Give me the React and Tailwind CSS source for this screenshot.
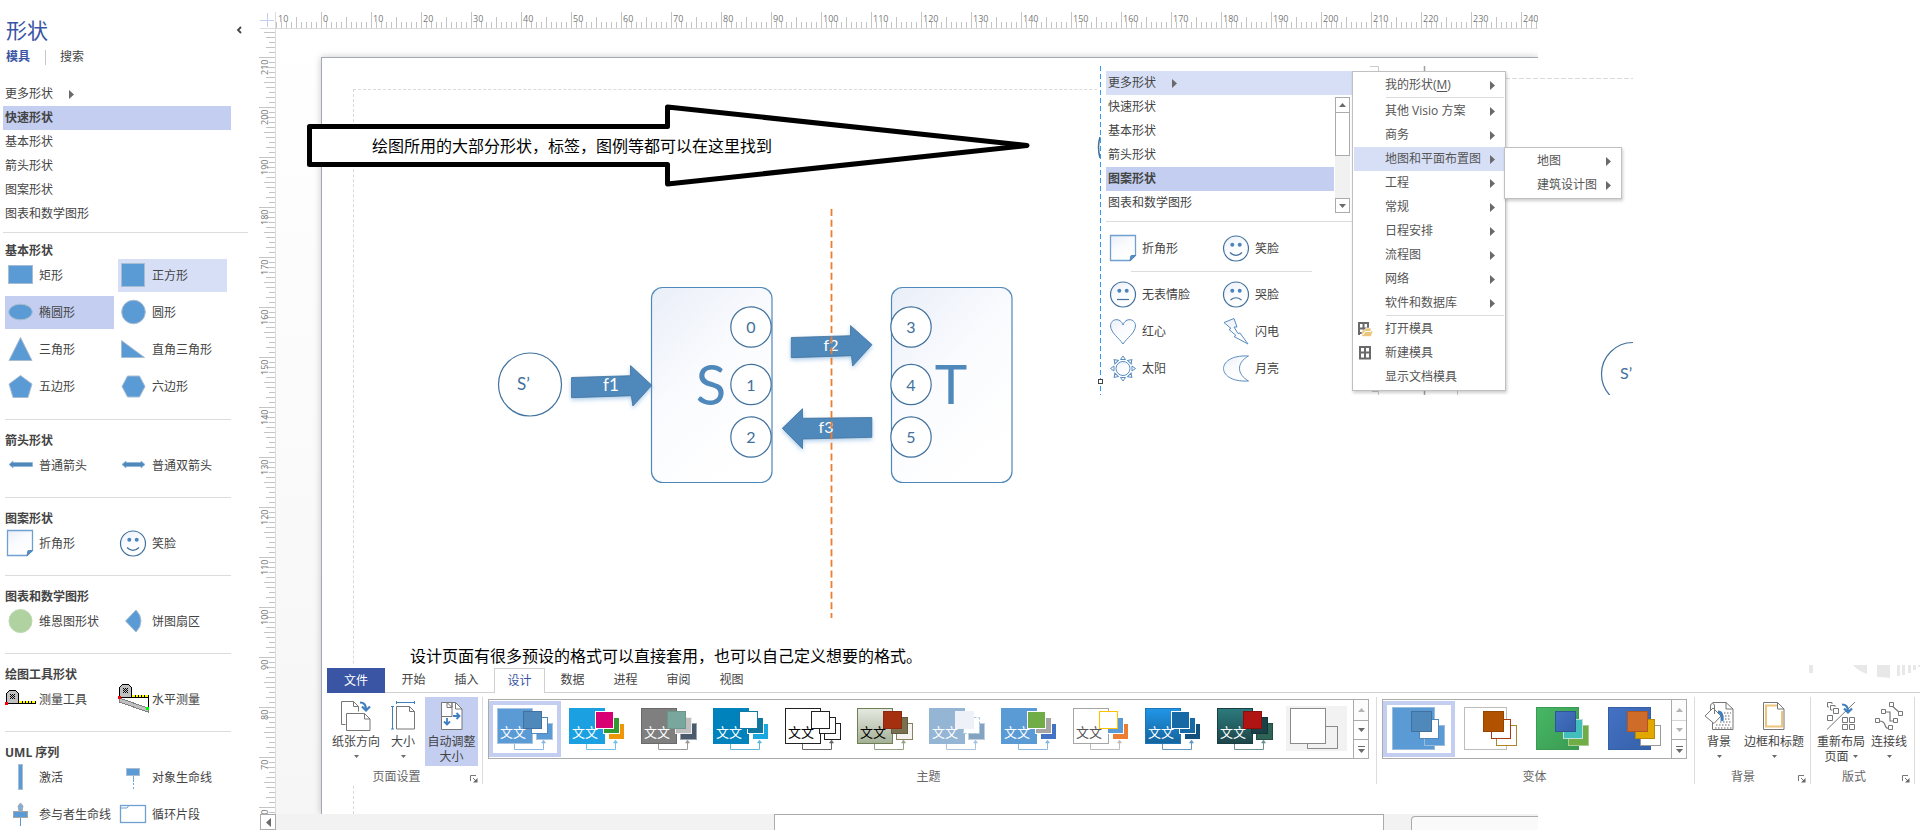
import React from "react";

const BLUE = "#5b9bd5";
const EDGE = "#a9bdd2";
const LINE = "#41719c";

function Defs() {
  return (
    <svg className="absolute h-0 w-0" aria-hidden="true">
      <defs>
        <linearGradient id="soft" x1="0" y1="0" x2="0.6" y2="1">
          <stop offset="0" stopColor="#e9eef8" />
          <stop offset="0.5" stopColor="#fafbfe" />
          <stop offset="1" stopColor="#fff" />
        </linearGradient>
        <linearGradient id="olive" x1="0" y1="0" x2="0" y2="1">
          <stop offset="0" stopColor="#e6e9e2" />
          <stop offset="1" stopColor="#a3b095" />
        </linearGradient>
        <linearGradient id="azure" x1="0" y1="0" x2="0" y2="1">
          <stop offset="0" stopColor="#2196e8" />
          <stop offset="1" stopColor="#14639c" />
        </linearGradient>
        <linearGradient id="pine" x1="0" y1="0" x2="0" y2="1">
          <stop offset="0" stopColor="#2c7b7d" />
          <stop offset="1" stopColor="#1d4549" />
        </linearGradient>
        <linearGradient id="leaf" x1="0" y1="0" x2="1" y2="1">
          <stop offset="0" stopColor="#47b865" />
          <stop offset="1" stopColor="#3a9a52" />
        </linearGradient>
        <linearGradient id="royal" x1="0" y1="0" x2="1" y2="1">
          <stop offset="0" stopColor="#4472c4" />
          <stop offset="1" stopColor="#3560a8" />
        </linearGradient>
      </defs>
    </svg>
  );
}

/* ---------- shape icons ---------- */

function Icon({ children }) {
  return (
    <svg className="h-8 w-8 shrink-0" viewBox="1 0 32 32" fill="none" aria-hidden="true">
      {children}
    </svg>
  );
}

function Note() {
  return (
    <Icon>
      <path d="M3.500 2.500h25v20l-5.500 5h-19.500z" fill="url(#soft)" stroke="#6fa0cf" strokeWidth="1.300" />
      <path d="M23 27.500l1-4.800 4.500-.2z" fill="#5b93c9" stroke="#4a82b8" />
    </Icon>
  );
}

function Face({ mouth }) {
  return (
    <Icon>
      <circle cx="16" cy="15.500" r="12.500" fill="url(#soft)" stroke={LINE} strokeWidth="1.200" />
      <circle cx="12.300" cy="11.800" r="2" fill="#4a86bd" />
      <circle cx="19.700" cy="11.800" r="2" fill="#4a86bd" />
      <path d={mouth} stroke={LINE} strokeWidth="1.200" />
    </Icon>
  );
}

const SMILE = "M10 19.500q6 6 12 0";
const FLAT = "M10 20.500h12";
const FROWN = "M10.500 21q5.500-4.500 11 0";

function Tape({ slope }) {
  const dy = slope ? -3 : 3;
  return (
    <Icon>
      <g transform={`translate(0 ${dy})`} shapeRendering="crispEdges">
        {slope && <path d="M2 17l29 10v4l-29-10z" fill="#c0c0c0" stroke="#808080" />}
        <path d="M2.500 16.500v-10l3-3h6l3 3v10z" fill="#c0c0c0" stroke="#000" />
        <path d="M6 7h1v1h-1zM8 7h1v1h-1zM10 7h1v1h-1zM7 8h1v1h-1zM9 8h1v1h-1zM6 9h1v1h-1zM8 9h1v1h-1zM10 9h1v1h-1zM7 10h1v1h-1zM9 10h1v1h-1zM6 11h1v1h-1zM8 11h1v1h-1zM10 11h1v1h-1z" fill="#000" />
        <path d="M15 14h16v2h-16z" fill="#ff0" />
        <path d="M15 16.500h17M18.500 14v2M21.500 14v2M24.500 14v2M27.500 14v2M31.500 14v3" stroke="#000" />
        {slope && <path d="M31.500 17v10" stroke="#000" />}
        {slope && <path d="M29 26h3v3h-3z" fill="#0f0" />}
        <path d="M1 15h3v3h-3z" fill="#f00" />
      </g>
    </Icon>
  );
}

const ICONS = {
  rect: <Icon><rect x="4.500" y="5.500" width="24" height="18" fill={BLUE} stroke={EDGE} /></Icon>,
  square: <Icon><rect x="4.500" y="3.500" width="23" height="23" fill={BLUE} stroke={EDGE} /></Icon>,
  ellipse: <Icon><ellipse cx="16.500" cy="15" rx="11.800" ry="7.800" fill={BLUE} stroke={EDGE} /></Icon>,
  circle: <Icon><circle cx="16.500" cy="15" r="11.800" fill={BLUE} stroke={EDGE} /></Icon>,
  triangle: <Icon><path d="M16.500 3.500L28 26.500h-23z" fill={BLUE} stroke={EDGE} /></Icon>,
  rightTri: <Icon><path d="M4.500 6.500L27.500 23.500h-23z" fill={BLUE} stroke={EDGE} /></Icon>,
  pentagon: <Icon><path d="M16.500 4.500L28 13L24 26.500h-15L5 13z" fill={BLUE} stroke={EDGE} /></Icon>,
  hexagon: <Icon><path d="M10.500 5h12L28 15.500L22.500 26h-12L5 15.500z" fill={BLUE} stroke={EDGE} /></Icon>,
  arrow: <Icon><path d="M5 14.500l4-3.500v1.500h19.500v4h-19.500v1.500z" fill="#4f88bb" stroke="#8fb4d6" strokeWidth="0.800" /></Icon>,
  twoWay: <Icon><path d="M5 14.500l4-3.500v1.500h15v-1.500l4 3.500-4 3.500v-1.500h-15v1.500z" fill="#4f88bb" stroke="#8fb4d6" strokeWidth="0.800" /></Icon>,
  note: <Note />,
  smile: <Face mouth={SMILE} />,
  flat: <Face mouth={FLAT} />,
  frown: <Face mouth={FROWN} />,
  venn: <Icon><circle cx="16.500" cy="15" r="11.500" fill="#b0d2a0" stroke="#bcd8b0" /></Icon>,
  pie: <Icon><path d="M8.500 15L19 4q5 5 5 11t-5 11z" fill={BLUE} stroke={EDGE} /></Icon>,
  tape: <Tape />,
  level: <Tape slope />,
  bar: <Icon><rect x="14.500" y="2.500" width="4" height="25" fill={BLUE} stroke={EDGE} /></Icon>,
  lifeline: <Icon><rect x="9.500" y="6.500" width="13" height="7" fill={BLUE} stroke={EDGE} /><path d="M16.500 14v6M16.500 21v2M16.500 25v2" stroke="#6fa6da" /></Icon>,
  actor: <Icon><path d="M16.500 4l2.500 3-1 5h-3l-1-5z" fill="#7fb0dd" stroke="#a6a6a6" /><rect x="9.500" y="12.500" width="14" height="6" fill={BLUE} stroke="#a6a6a6" /><path d="M16.500 19v8" stroke={BLUE} /></Icon>,
  loop: <Icon><rect x="3.500" y="6.500" width="25" height="17" stroke="#6fa0cf" strokeWidth="1.300" /><path d="M4 9h6l1.500-2" stroke="#6fa0cf" /></Icon>,
  heart: <Icon><path d="M16 28C12 22 4 17 3.500 10C3.500 2.500 13.500 1 16 9C18.500 1 28.500 2.500 28.500 10C28 17 20 22 16 28z" fill="url(#soft)" stroke="#5a8dbf" /></Icon>,
  bolt: <Icon><path d="M14 2.500L4 6.500l7 6-2 1 7 6-2 1 14 7.500-8-11-2 .5-4-6.500h3z" fill="url(#soft)" stroke="#5a8dbf" /></Icon>,
  sun: (
    <Icon>
      <circle cx="16" cy="15.500" r="7" fill="url(#soft)" stroke="#5a8dbf" />
      {[0, 45, 90, 135, 180, 225, 270, 315].map((a) => (
        <path key={a} d="M13.500 6.500L16 3l2.500 3.500z" stroke="#5a8dbf" transform={`rotate(${a} 16 15.5)`} />
      ))}
    </Icon>
  ),
  moon: <Icon><path d="M28.500 3C10 2 3.500 10 3.500 15.500S10 29 28.500 28C17 21.500 16 10 28.500 3z" fill="url(#soft)" stroke="#5a8dbf" /></Icon>,
};

/* ---------- side panel ---------- */

const SECTIONS = [
  {
    title: "基本形状",
    items: [
      ["rect", "矩形"], ["square", "正方形", "bg-[#d7dff6]"],
      ["ellipse", "椭圆形", "bg-[#c3cef1]"], ["circle", "圆形"],
      ["triangle", "三角形"], ["rightTri", "直角三角形"],
      ["pentagon", "五边形"], ["hexagon", "六边形"],
    ],
  },
  { title: "箭头形状", items: [["arrow", "普通箭头"], ["twoWay", "普通双箭头"]] },
  { title: "图案形状", items: [["note", "折角形"], ["smile", "笑脸"]] },
  { title: "图表和数学图形", items: [["venn", "维恩图形状"], ["pie", "饼图扇区"]] },
  { title: "绘图工具形状", items: [["tape", "测量工具"], ["level", "水平测量"]] },
  { title: "UML 序列", items: [["bar", "激活"], ["lifeline", "对象生命线"], ["actor", "参与者生命线"], ["loop", "循环片段"]] },
];

function Tri({ className = "" }) {
  return (
    <svg className={`h-[9px] w-[5px] shrink-0 ${className}`} viewBox="0 0 5 9" aria-hidden="true">
      <path d="M0 0l5 4.500-5 4.500z" fill="#6a6a6a" />
    </svg>
  );
}

function ShapeButton({ item: [icon, label, bg = ""] }) {
  return (
    <button className={`flex h-[33px] items-center whitespace-nowrap text-left ${bg}`}>
      {ICONS[icon]}
      <span className="ml-[2px]">{label}</span>
    </button>
  );
}

function ListRow({ label, active }) {
  return (
    <button className={`flex h-6 w-full items-center pl-[2px] text-left ${active ? "bg-[#c3cef1] font-bold" : ""}`}>
      {label}
    </button>
  );
}

function SidePanel() {
  return (
    <aside className="w-[260px] shrink-0 pl-[3px] pt-4">
      <header className="flex h-7 items-center justify-between pl-[3px] pr-[18px]">
        <h1 className="text-[21px] leading-7 text-[#3955a3]">形状</h1>
        <button aria-label="折叠">
          <svg className="h-2 w-[6px]" viewBox="0 0 6 8" fill="none">
            <path d="M5 1L2 4l3 3" stroke="#444" strokeWidth="1.800" />
          </svg>
        </button>
      </header>
      <nav className="mt-[2px] flex h-[22px] items-center pl-[3px]">
        <button className="font-bold text-[#3955a3]">模具</button>
        <span className="ml-[15px] mr-[14px] h-[15px] w-px bg-[#c6c6c6]" />
        <button>搜索</button>
      </nav>
      <div className="mt-[14px] pr-[29px]">
        <button className="flex h-6 w-full items-center pl-[2px]">
          更多形状
          <Tri className="ml-4" />
        </button>
        {["快速形状", "基本形状", "箭头形状", "图案形状", "图表和数学图形"].map((t, i) => (
          <ListRow key={t} label={t} active={i === 0} />
        ))}
      </div>
      <div className="mr-3 mt-[6px] h-px bg-[#dcdcdc]" />
      {SECTIONS.map((s, i) => (
        <section
          key={s.title}
          className={`ml-[2px] mr-[29px] ${i === 0 ? "pb-4 pt-[9px]" : "border-t border-[#dcdcdc] pt-3"} ${i > 0 && i < 5 ? "pb-[15px]" : ""}`}
        >
          <h2 className="h-[17px] font-bold leading-[17px]">{s.title}</h2>
          <div className="grid grid-cols-[109px_109px] gap-1">
            {s.items.map((it) => (
              <ShapeButton key={it[1]} item={it} />
            ))}
          </div>
        </section>
      ))}
    </aside>
  );
}

/* ---------- rulers ---------- */

const tickSize = (i) => (i % 10 === 0 ? 16 : i % 5 === 0 ? 11 : i % 2 === 0 ? 9 : 6);

function TopRuler() {
  const ticks = [];
  for (let i = -9; i <= 244; i++) {
    const x = 45.500 + i * 5;
    const k = ((i % 10) + 10) % 10;
    if (x < 1262) ticks.push(<path key={i} d={`M${x} 16v${-(k === 0 ? 16 : k === 5 ? 11 : 6)}`} stroke="#c4c4c4" />);
  }
  const labels = [<text key="n" x="2" y="10">10</text>];
  for (let v = 0; v <= 240; v += 10) labels.push(<text key={v} x={47 + v * 5} y="10">{v}</text>);
  return (
    <svg className="h-[17px] min-w-0 flex-1 overflow-hidden border-b border-[#dcdcdc]" aria-hidden="true">
      {ticks}
      <g fill="#777" className="font-['Open_Sans',sans-serif] text-[9px]">{labels}</g>
    </svg>
  );
}

function LeftRuler() {
  const ticks = [];
  for (let i = -5; i <= 151; i++) {
    const y = 28.500 + i * 5;
    ticks.push(<path key={i} d={`M15 ${y}h${-tickSize(Math.abs(i))}`} stroke="#c4c4c4" />);
  }
  const labels = [];
  for (let n = 0; n < 16; n++) {
    const v = 210 - n * 10;
    const y = 29 + n * 50;
    labels.push(
      <text key={v} transform={`translate(8 ${y + (v >= 100 ? 17 : 12)}) rotate(-90)`}>{v}</text>
    );
  }
  return (
    <svg className="h-full w-4 shrink-0 overflow-visible border-r border-[#dcdcdc]" aria-hidden="true">
      {ticks}
      <g fill="#777" className="font-['Open_Sans',sans-serif] text-[9px]">{labels}</g>
    </svg>
  );
}

/* ---------- diagram ---------- */

function Diagram() {
  const state = (cx, cy, t) => (
    <g key={t}>
      <circle cx={cx} cy={cy} r="20.200" fill="#fff" stroke={LINE} strokeWidth="1.200" />
      <text x={cx} y={cy + 6} fontSize="16" fill={LINE} textAnchor="middle">{t}</text>
    </g>
  );
  return (
    <svg
      className="absolute left-[24px] top-[71px] h-[520px] w-[740px] font-[Lato,'Open_Sans',sans-serif]"
      viewBox="300 100 740 520"
      fill="none"
    >
      <path d="M309.500 126.500H667.500V107L1027 145.500L667.500 184V164.500H309.500z" fill="#fff" stroke="#000" strokeWidth="5" strokeLinejoin="round" />
      <circle cx="530" cy="384.500" r="31.500" stroke={LINE} strokeWidth="1.200" />
      <text x="517" y="390" fontSize="17" fill={LINE}>S’</text>
      <rect x="651.500" y="287.500" width="120.500" height="195" rx="11" fill="url(#soft)" stroke="#4f88bb" strokeWidth="1.200" />
      <rect x="891.500" y="287.500" width="120.500" height="195" rx="11" fill="url(#soft)" stroke="#4f88bb" strokeWidth="1.200" />
      <text x="711" y="405" fontSize="56" fill="#4f88bb" textAnchor="middle">S</text>
      <text x="951" y="404" fontSize="55" fill="#4f88bb" textAnchor="middle">T</text>
      {state(751, 327, "0")}
      {state(751, 384.500, "1")}
      {state(751, 437, "2")}
      {state(911, 327, "3")}
      {state(911, 384.500, "4")}
      {state(911, 437, "5")}
      <g fill="#4f88bb" stroke="#41719c" strokeWidth="0.800" className="drop-shadow-[0_2px_2px_rgba(91,155,213,0.5)]">
        <path d="M571.500 377.500L630.500 375.700V365.500L651.800 385.300L632.900 406L631.300 395.700L571.500 397.700z" />
        <path d="M791.300 337.500L850.500 335.700V325.500L872 344.700L852.700 366L851.500 355.700L791.300 357.700z" />
        <path d="M782.300 428.300L802.500 408.700V418.300L871.800 417.500V437.300L802.500 439V448.700z" />
      </g>
      <g fill="#fff" fontSize="17" textAnchor="middle">
        <text x="611" y="391">f1</text>
        <text x="831" y="351" fontSize="16">f2</text>
        <text x="826" y="433" fontSize="16">f3</text>
      </g>
      <path d="M831.500 209V618" stroke="#ed7d31" strokeWidth="1.800" strokeDasharray="7 3.630" />
    </svg>
  );
}

/* ---------- stencil popup ---------- */

const MENU = [
  ["我的形状(M)", true],
  null,
  ["其他 Visio 方案", true], ["商务", true], ["地图和平面布置图", true, true], ["工程", true],
  ["常规", true], ["日程安排", true], ["流程图", true], ["网络", true], ["软件和数据库", true],
  null,
  ["打开模具"], ["新建模具"], ["显示文档模具"],
];

function MenuIcon({ name }) {
  if (name === "打开模具")
    return (
      <svg className="h-4 w-4" viewBox="0 0 16 16" fill="none" aria-hidden="true">
        <path d="M2 14V2h9v5M2 7.500h9M6.500 2v5.500M6.500 7.500V12H2" stroke="#6a6a6a" strokeWidth="2" />
        <path d="M5 15.500V9h3l1-2h5v3h2l-2 5.500z" fill="#ecc47c" stroke="#fff" strokeWidth="0.600" />
        <path d="M6 14l2-3.500h6" stroke="#fff" />
      </svg>
    );
  if (name === "新建模具")
    return (
      <svg className="h-4 w-4" viewBox="0 0 16 16" fill="none" aria-hidden="true">
        <path d="M3 2h10v11.500H3zM8 2v11.500M3 7.500h10" stroke="#6a6a6a" strokeWidth="2" />
      </svg>
    );
  return null;
}

function MenuRow({ label, arrow, active }) {
  const i = label.indexOf("(M)");
  return (
    <button className={`flex h-6 w-full items-center pl-[3px] pr-[9px] text-left ${active ? "bg-[#d7dff6]" : ""}`}>
      <span className="w-7 shrink-0"><MenuIcon name={label} /></span>
      <span className="flex-1 whitespace-nowrap">
        {i < 0 ? label : <>{label.slice(0, i)}(<u className="underline-offset-2">M</u>)</>}
      </span>
      {arrow && <Tri />}
    </button>
  );
}

function SpinGlyph({ up }) {
  return (
    <svg className="h-1 w-[7px]" viewBox="0 0 7 4" aria-hidden="true">
      <path d={up ? "M0 4L3.500 0 7 4z" : "M0 0l3.500 4L7 0z"} fill="#6a6a6a" />
    </svg>
  );
}

function StencilPopup() {
  return (
    <div className="absolute left-[837px] top-[66px] flex h-[329px] w-[536px] overflow-hidden bg-white">
      <svg className="h-full w-[9px] shrink-0" viewBox="0 0 9 329" fill="none" aria-hidden="true">
        <path d="M3 71q-3 10 0 21" stroke={LINE} strokeWidth="1.500" />
        <path d="M3.500 0v329" stroke="#3399ee" strokeDasharray="5 3" />
        <rect x="1.500" y="313.500" width="4" height="4" fill="#fff" stroke="#444" />
      </svg>
      <div className="w-[246px] shrink-0 pt-[5px]">
        <button className="flex h-6 w-full items-center bg-[#d7dff6] pl-[2px]">
          更多形状
          <Tri className="ml-4" />
        </button>
        <div className="flex">
          <div className="flex-1">
            {["快速形状", "基本形状", "箭头形状", "图案形状", "图表和数学图形"].map((t, i) => (
              <ListRow key={t} label={t} active={i === 3} />
            ))}
          </div>
          <div className="ml-px mr-[2px] mt-[2px] flex h-[116px] w-[15px] flex-col bg-[#f1f1f1]">
            <button aria-label="向上滚动" className="flex h-4 items-center justify-center border border-[#ababab] bg-white"><SpinGlyph up /></button>
            <div className="h-[43px] border border-t-0 border-[#ababab] bg-white" />
            <button aria-label="向下滚动" className="mt-auto flex h-[15px] items-center justify-center border border-[#ababab] bg-white"><SpinGlyph /></button>
          </div>
        </div>
        <div className="mt-[6px] h-px bg-[#dcdcdc]" />
        <div className="grid grid-cols-[113px_113px] pl-[2px] pt-[10px]">
          <ShapeButton item={["note", "折角形"]} />
          <ShapeButton item={["smile", "笑脸"]} />
        </div>
        <div className="ml-[25px] mr-10 mt-[6px] h-px bg-[#dcdcdc]" />
        <div className="grid grid-cols-[113px_113px] gap-y-1 pl-[2px] pt-[6px]">
          {[["flat", "无表情脸"], ["frown", "哭脸"], ["heart", "红心"], ["bolt", "闪电"], ["sun", "太阳"], ["moon", "月亮"]].map((it) => (
            <ShapeButton key={it[1]} item={it} />
          ))}
        </div>
      </div>
      <svg className="absolute bottom-0 left-[256px] h-[329px] w-[280px]" viewBox="1353 66 280 329" fill="none" aria-hidden="true">
        <path d="M1370 66.500h8.500v6M1372 391.500h6.500v4M1457.500 391v4" stroke="#c9c9c9" />
        <path d="M1424.500 66v329" stroke="#9a9fa8" strokeWidth="1.500" />
        <path d="M1505 78.500h128" stroke="#dadada" strokeDasharray="5 2" />
        <circle cx="1633" cy="374" r="31.500" stroke={LINE} strokeWidth="1.200" />
        <text x="1620" y="379" fontSize="16" fill={LINE} className="font-[Lato,sans-serif]">S’</text>
      </svg>
      <div className="absolute left-[255px] top-[5px] w-[154px] border border-[#c0c0c0] bg-white p-px text-[#555] shadow-[1px_2px_3px_rgba(0,0,0,0.2)]">
        {MENU.map((m, i) =>
          m ? <MenuRow key={i} label={m[0]} arrow={m[1]} active={m[2]} /> : <div key={i} className="mb-px ml-8 h-px bg-[#dcdcdc]" />
        )}
      </div>
      <div className="absolute left-[407px] top-[81px] w-[118px] border border-[#c0c0c0] bg-white p-px text-[#555] shadow-[1px_2px_3px_rgba(0,0,0,0.2)]">
        <MenuRow label="地图" arrow />
        <MenuRow label="建筑设计图" arrow />
      </div>
    </div>
  );
}

/* ---------- ribbon ---------- */

const THEMES = [
  { m: BLUE, me: "#a9c4e0", a: "#4f88bb", ae: "#41719c", b: "#fff", be: "#4f88bb", c: BLUE, ce: "#a9c4e0", t: "#fff", l: "#8ab8e4" },
  { m: "#1ba1e2", me: "#1ba1e2", a: "#d80073", ae: "#fff", b: "#339933", be: "#fff", c: "#f09609", ce: "#fff", t: "#fff", l: "#6cc3ec" },
  { m: "#7f7f7f", me: "#6a6a6a", a: "#7aa79d", ae: "#6a968c", b: "#bfbfbf", be: "#eee", c: "#4a5a6c", ce: "#9aa4ae", t: "#fff", l: "#9a9a9a" },
  { m: "#0083bd", me: "#0083bd", a: "#fff", ae: "#1279a4", b: "#12779f", be: "#fff", c: "#1ba8e0", ce: "#fff", t: "#fff", l: "#5fb5da" },
  { m: "#fff", me: "#222", a: "#fff", ae: "#222", b: "#fff", be: "#222", c: "#fff", ce: "#222", t: "#000", l: "#666" },
  { m: "url(#olive)", me: "#6f7f55", a: "#a5300f", ae: "#8a2a10", b: "#78704f", be: "#605a40", c: "#f5f3ef", ce: "#8a8068", t: "#000", l: "#94a284" },
  { m: "#94b5d3", me: "#94b5d3", a: "#eef2f8", ae: "#eef2f8", b: "#fff", be: "#9ec5e0", c: "#84a3c0", ce: "#c0d0e0", t: "#fff", l: "#a9c4dc", dash: "3 2" },
  { m: BLUE, me: BLUE, a: "#70ad47", ae: "#fff", b: "#a5a5a5", be: "#fff", c: "#4472c4", ce: "#fff", t: "#fff", l: "#8ab8e4" },
  { m: "#fff", me: "#a6a6a6", a: "#fff", ae: "#ffc000", b: BLUE, be: "#fff", c: "#ed7d31", ce: "#fff", t: "#555", l: "#bdbdbd" },
  { m: "url(#azure)", me: "#1c76b8", a: "#1769a5", ae: "#fff", b: "#1769a5", be: "#fff", c: "#13507e", ce: "#fff", t: "#fff", l: "#5f97c0" },
  { m: "url(#pine)", me: "#1a3f42", a: "#b01513", ae: "#8a1010", b: "#1a4246", be: "#143539", c: "#2f6355", ce: "#224c40", t: "#fff", l: "#6c908f" },
];

function ThemeArt({ s }) {
  return (
    <svg className="h-14 w-[72px]" viewBox="0 0 72 56" fill="none" aria-hidden="true">
      <path d="M25.500 42v6.500h29V40" stroke={s.l} />
      <path d="M52.500 42l2-3 2 3z" fill={s.l} stroke={s.l} strokeWidth="0.600" />
      <rect x="8.500" y="7.500" width="35" height="35" fill={s.m} stroke={s.me} />
      <text x="11" y="36" fontSize="13" fill={s.t}>文文</text>
      <rect x="47.500" y="22.500" width="16" height="16" fill={s.c} stroke={s.ce} />
      <rect x="42.500" y="16.500" width="16" height="16" fill={s.b} stroke={s.be} strokeDasharray={s.dash} />
      <rect x="34.500" y="10.500" width="18" height="17" fill={s.a} stroke={s.ae} />
    </svg>
  );
}

function BlankArt() {
  return (
    <svg className="h-14 w-[72px]" viewBox="0 0 72 56" fill="none" aria-hidden="true">
      <rect x="5" y="5" width="61" height="45" fill="#f2f2f2" />
      <rect x="26.500" y="25.500" width="30" height="22" stroke="#8a8a8a" />
      <rect x="9.500" y="7.500" width="35" height="35" fill="#fff" stroke="#8a8a8a" />
    </svg>
  );
}

const VARIANTS = [
  { m: BLUE, me: "#9dbcda", a: "#4f88bb", ae: "#41719c", b: "#fff", be: "#4f88bb", c: BLUE, ce: "#9dbcda" },
  { m: "#fff", me: "#bdbdbd", a: "#b05200", ae: "#944600", b: "#fff", be: "#a63b14", c: "#fff", ce: "#b0842a" },
  { m: "url(#leaf)", me: "#3c9a54", a: "url(#royal)", ae: "#2f5597", b: "#43bfbb", be: "#bfe0e0", c: "#70ad47", ce: "#a9cc90" },
  { m: "url(#royal)", me: "#3560a8", a: "#d06c2a", ae: "#b4571c", b: "#e2a800", be: "#b98a00", c: "#fff", ce: "#9a9a9a" },
];

function VariantArt({ s }) {
  return (
    <svg className="h-14 w-[72px]" viewBox="0 0 72 56" fill="none" aria-hidden="true">
      <rect x="9.500" y="6.500" width="42" height="42" fill={s.m} stroke={s.me} />
      <rect x="41.500" y="24.500" width="20" height="20" fill={s.c} stroke={s.ce} />
      <rect x="36.500" y="18.500" width="19" height="19" fill={s.b} stroke={s.be} />
      <rect x="28.500" y="10.500" width="20" height="20" fill={s.a} stroke={s.ae} />
    </svg>
  );
}

function Gallery({ items, name, dimDown }) {
  return (
    <div className="flex h-[60px] w-max border border-[#ababab]">
      {items.map((art, i) => (
        <button key={i} aria-label={`${name} ${i + 1}`} className="relative mt-px h-14 w-[72px] shrink-0">
          {art}
          {i === 0 && <span className="absolute inset-0 border-4 border-[#c3cef1]" />}
        </button>
      ))}
      <div className="flex w-[15px] flex-col border-l border-[#ababab]">
        <button aria-label="上一行" className="flex h-5 items-center justify-center bg-[#fbfbfb] opacity-50"><SpinGlyph up /></button>
        <button aria-label="下一行" className={`flex h-[19px] items-center justify-center border-t border-[#ababab] ${dimDown ? "opacity-50" : ""}`}><SpinGlyph /></button>
        <button aria-label="其他" className="flex flex-1 flex-col items-center justify-center gap-[2px] border-t border-[#ababab]">
          <span className="h-px w-[7px] bg-[#6a6a6a]" />
          <SpinGlyph />
        </button>
      </div>
    </div>
  );
}

function Caret() {
  return (
    <svg className="inline-block h-[3px] w-[5px]" viewBox="0 0 5 3" aria-hidden="true">
      <path d="M0 0h5L2.500 3z" fill="#6a6a6a" />
    </svg>
  );
}

function Tool({ icon, lines, width, active, caret = true }) {
  return (
    <button className={`flex h-[69px] flex-col items-center pt-1 ${width} ${active ? "bg-[#c3cef1]" : ""}`}>
      {icon}
      <span className="mt-[3px] h-[15px] whitespace-nowrap leading-[15px]">{lines[0]}</span>
      <span className="flex h-[15px] items-center gap-1 whitespace-nowrap leading-[15px]">
        {lines[1]}
        {caret && <Caret />}
      </span>
    </button>
  );
}

function Group({ label, launcher, pad = "", children }) {
  return (
    <section className={`flex shrink-0 flex-col border-r border-[#dcdcdc] ${pad}`}>
      <div className="flex h-[72px]">{children}</div>
      <footer className={`relative flex h-[15px] items-center justify-center text-[#666] ${launcher ? "pr-4" : ""}`}>
        {label}
        {launcher && (
          <button aria-label={`${label}选项`} className="absolute bottom-px right-0">
            <svg className="h-2 w-2" viewBox="0 0 8 8" fill="none">
              <path d="M.5 6V.5H6M3 3l3 3" stroke="#777" />
              <path d="M7.500 3v4.500H3z" fill="#666" />
            </svg>
          </button>
        )}
      </footer>
    </section>
  );
}

const G = "#777";
const B = "#3f7fbf";

const TOOL_ICONS = {
  orient: (
    <svg className="h-[30px] w-[30px]" viewBox="0 0 30 30" fill="none">
      <path d="M4.500 23.500H.5V.5h12l5 5v5M12.500.5v5h5" stroke={G} />
      <path d="M5.500 12.500h18l5.500 5.500v11.500H5.500z" fill="#fff" stroke={G} />
      <path d="M23.500 12.500v5.500H29" stroke={G} />
      <path d="M19 1.500q6 0 6 7M21 5.500l4 4 4-4" stroke={B} strokeWidth="2.200" />
    </svg>
  ),
  size: (
    <svg className="h-[30px] w-[26px]" viewBox="0 0 26 30" fill="none">
      <path d="M6.500 5.500h13l5 5v17.500H6.500zM19.500 5.500v5h5" stroke={G} />
      <path d="M6.500 1.500h18M6.500 0v3M24.500 0v3M2.500 5.500v22.500M1 5.500h3M1 28h3" stroke={B} />
    </svg>
  ),
  auto: (
    <svg className="h-[30px] w-[22px]" viewBox="0 0 22 30" fill="none">
      <path d="M.5 1.500h14l6.500 6.500v20.500H.5z" fill="#fff" stroke={G} />
      <path d="M.5 15.500h10.500v-14M6 1.500l5 5v-5M6 1.500v5h5M14.500 1.500v6.500H21" stroke={G} />
      <path d="M6 17v6M3 20.500l3 3 3-3M12 15h6M15.500 12l3 3-3 3" stroke={B} strokeWidth="1.800" />
    </svg>
  ),
  background: (
    <svg className="h-[30px] w-[30px]" viewBox="0 0 30 30" fill="none">
      <path d="M8.500 21v7.500h20.500V8l-7-6.500H8.500M22 1.500V8h7" stroke={G} />
      <path d="M20 12h7M18 15h9M18 18h9M16 21h11M12 24h15M11 27h17" stroke="#999" strokeDasharray="1.500 1.500" strokeWidth="1.500" />
      <path d="M1 15l8-8 8 8-7 7.500z" fill="#fff" stroke={G} />
      <path d="M6.500 9V5q0-2.500 2-2.500T10.500 5v8" stroke={G} />
      <path d="M14 11q5 0 4 9" stroke={B} strokeWidth="3" />
    </svg>
  ),
  border: (
    <svg className="h-[30px] w-[22px]" viewBox="0 0 22 30" fill="none">
      <path d="M.5 1.500h14l6.500 6.500v20.500H.5z" stroke={G} />
      <path d="M14.500 4.500H3v21h16V10" stroke="#ecc47c" strokeWidth="2" />
      <path d="M14.500 1.500v6.500H21z" fill="#fff" stroke={G} />
    </svg>
  ),
  relayout: (
    <svg className="h-[30px] w-[30px]" viewBox="0 0 30 30" fill="none">
      <path d="M1 28.500L29 1" stroke={G} />
      <path d="M3 6H1.500V1.500H6V3M6.500 9H4.500V4.500H9V6" stroke={G} />
      <path d="M7.500 7.500h5v5h-5zM1.500 14.500h5v5h-5zM16.500 16.500h5v5h-5zM23.500 16.500h5v5h-5zM16.500 23.500h5v5h-5zM23.500 23.500h5v5h-5z" fill="#fff" stroke={G} />
      <path d="M16 3.500q6 0 6 7M18 7.500l4 4 4-4" stroke={B} strokeWidth="2.200" />
    </svg>
  ),
  connector: (
    <svg className="h-[30px] w-[30px]" viewBox="0 0 30 30" fill="none">
      <path d="M17 4l9 8M11 11h5v9h5M5 20q5 0 6 4t4 3" stroke={G} strokeWidth="1.200" />
      <path d="M15.500 1.500h4v4h-4zM24.500 10.500h4v4h-4zM7.500 8.500h4v4h-4zM19.500 17.500h4v4h-4zM1.500 17.500h4v4h-4zM14.500 24.500h4v4h-4z" fill="#fff" stroke={G} />
    </svg>
  ),
};

function Ribbon() {
  return (
    <div className="absolute left-[63px] right-0 top-[665px] overflow-hidden bg-white">
      <svg className="absolute right-0 top-0 h-[14px] w-[112px]" viewBox="0 0 112 14" fill="#e8e8e8" aria-hidden="true">
        <path d="M1 0h4v8H1zM45 0h14v9q-9-3-14-9zM69 0h13v13q-7-1-13-1zM89 0h3v11h-3zM94 0h3v10h-3zM100 0h3v8h-3zM105 0h3v5h-3zM110 0h2v2h-2z" />
      </svg>
      <div className="ml-1 mt-[3px] flex h-[25px] border-b border-[#d0d0d0]">
        <button className="h-[25px] w-[58px] bg-[#3955a3] text-white">文件</button>
        {["开始", "插入", "设计", "数据", "进程", "审阅", "视图"].map((t) =>
          t === "设计" ? (
            <button key={t} className="relative ml-[2px] h-[25px] w-[51px] border border-b-0 border-[#d0d0d0] bg-white text-[#3955a3]">{t}</button>
          ) : (
            <button key={t} className={`h-[24px] w-[51px] ${t === "开始" ? "ml-[3px]" : "ml-[2px]"}`}>{t}</button>
          )
        )}
      </div>
      <div className="ml-1 mt-[4px] flex">
        <Group label="页面设置" launcher pad="pl-1 pr-1">
          <Tool icon={TOOL_ICONS.orient} lines={["纸张方向"]} width="w-[50px]" />
          <Tool icon={TOOL_ICONS.size} lines={["大小"]} width="w-11" />
          <Tool icon={TOOL_ICONS.auto} lines={["自动调整", "大小"]} width="w-[53px]" active caret={false} />
        </Group>
        <Group label="主题" pad="pl-[5px] pr-[7px]">
          <div className="pt-[2px]">
            <Gallery name="主题" items={[...THEMES.map((s, i) => <ThemeArt key={i} s={s} />), <BlankArt key="blank" />]} />
          </div>
        </Group>
        <Group label="变体" pad="pl-[5px] pr-[7px]">
          <div className="pt-[2px]">
            <Gallery name="变体" dimDown items={VARIANTS.map((s, i) => <VariantArt key={i} s={s} />)} />
          </div>
        </Group>
        <Group label="背景" launcher pad="pl-px pr-1">
          <Tool icon={TOOL_ICONS.background} lines={["背景"]} width="w-[46px]" />
          <Tool icon={TOOL_ICONS.border} lines={["边框和标题"]} width="w-16" />
        </Group>
        <Group label="版式" launcher pad="pl-[3px] pr-1">
          <Tool icon={TOOL_ICONS.relayout} lines={["重新布局", "页面"]} width="w-[54px]" />
          <Tool icon={TOOL_ICONS.connector} lines={["连接线"]} width="w-[42px]" />
        </Group>
      </div>
    </div>
  );
}

/* ---------- page ---------- */

export default function App() {
  return (
    <div className="relative flex min-h-screen overflow-hidden bg-white font-['Open_Sans','Noto_Sans_CJK_SC',sans-serif] text-[12px] leading-[18px] text-[#444]">
      <Defs />
      <SidePanel />
      <main className="relative flex min-w-0 flex-1 flex-col pt-3">
        <div className="mr-[382px] flex flex-col">
          <div className="flex">
            <svg className="h-[17px] w-4 shrink-0 border-b border-r border-[#dcdcdc]" aria-hidden="true">
              <path d="M0 8.500h14M7.500 1v14" stroke="#c3cef1" />
            </svg>
            <TopRuler />
          </div>
          <div className="flex h-[785px]">
            <LeftRuler />
            <div className="flex min-w-0 flex-1 overflow-hidden bg-linear-to-b from-white to-[#f6f6f6] pl-[45px] pt-7">
              <div className="relative flex flex-1 border-l border-t border-[#a4a8b2] bg-white shadow-[0_0_7px_rgba(0,0,0,0.22)]">
                <div className="ml-[31px] mt-[31px] flex-1 border-l border-t border-dashed border-[#dadada]" />
              </div>
            </div>
          </div>
          <div className="flex h-4 bg-[#f2f2f2]">
            <button aria-label="向左滚动" className="flex w-4 items-center justify-center border border-[#ababab] bg-white">
              <Tri className="rotate-180" />
            </button>
            <div className="flex-[499]" />
            <div className="flex-[610] border border-b-0 border-[#ababab] bg-white" />
            <div className="flex-[27]" />
            <div className="mt-[2px] flex-[126] rounded-tl border-l border-t border-[#ababab] bg-[#fafafa]" />
          </div>
        </div>
        <div className="absolute left-4 top-[29px]">
          <Diagram />
          <p className="absolute left-[96px] top-[105px] whitespace-nowrap text-[16px] leading-6 text-black">
            绘图所用的大部分形状，标签，图例等都可以在这里找到
          </p>
          <p className="absolute left-[134px] top-[615px] whitespace-nowrap text-[16px] leading-6 text-black">
            设计页面有很多预设的格式可以直接套用，也可以自己定义想要的格式。
          </p>
        </div>
        <StencilPopup />
        <Ribbon />
      </main>
    </div>
  );
}
